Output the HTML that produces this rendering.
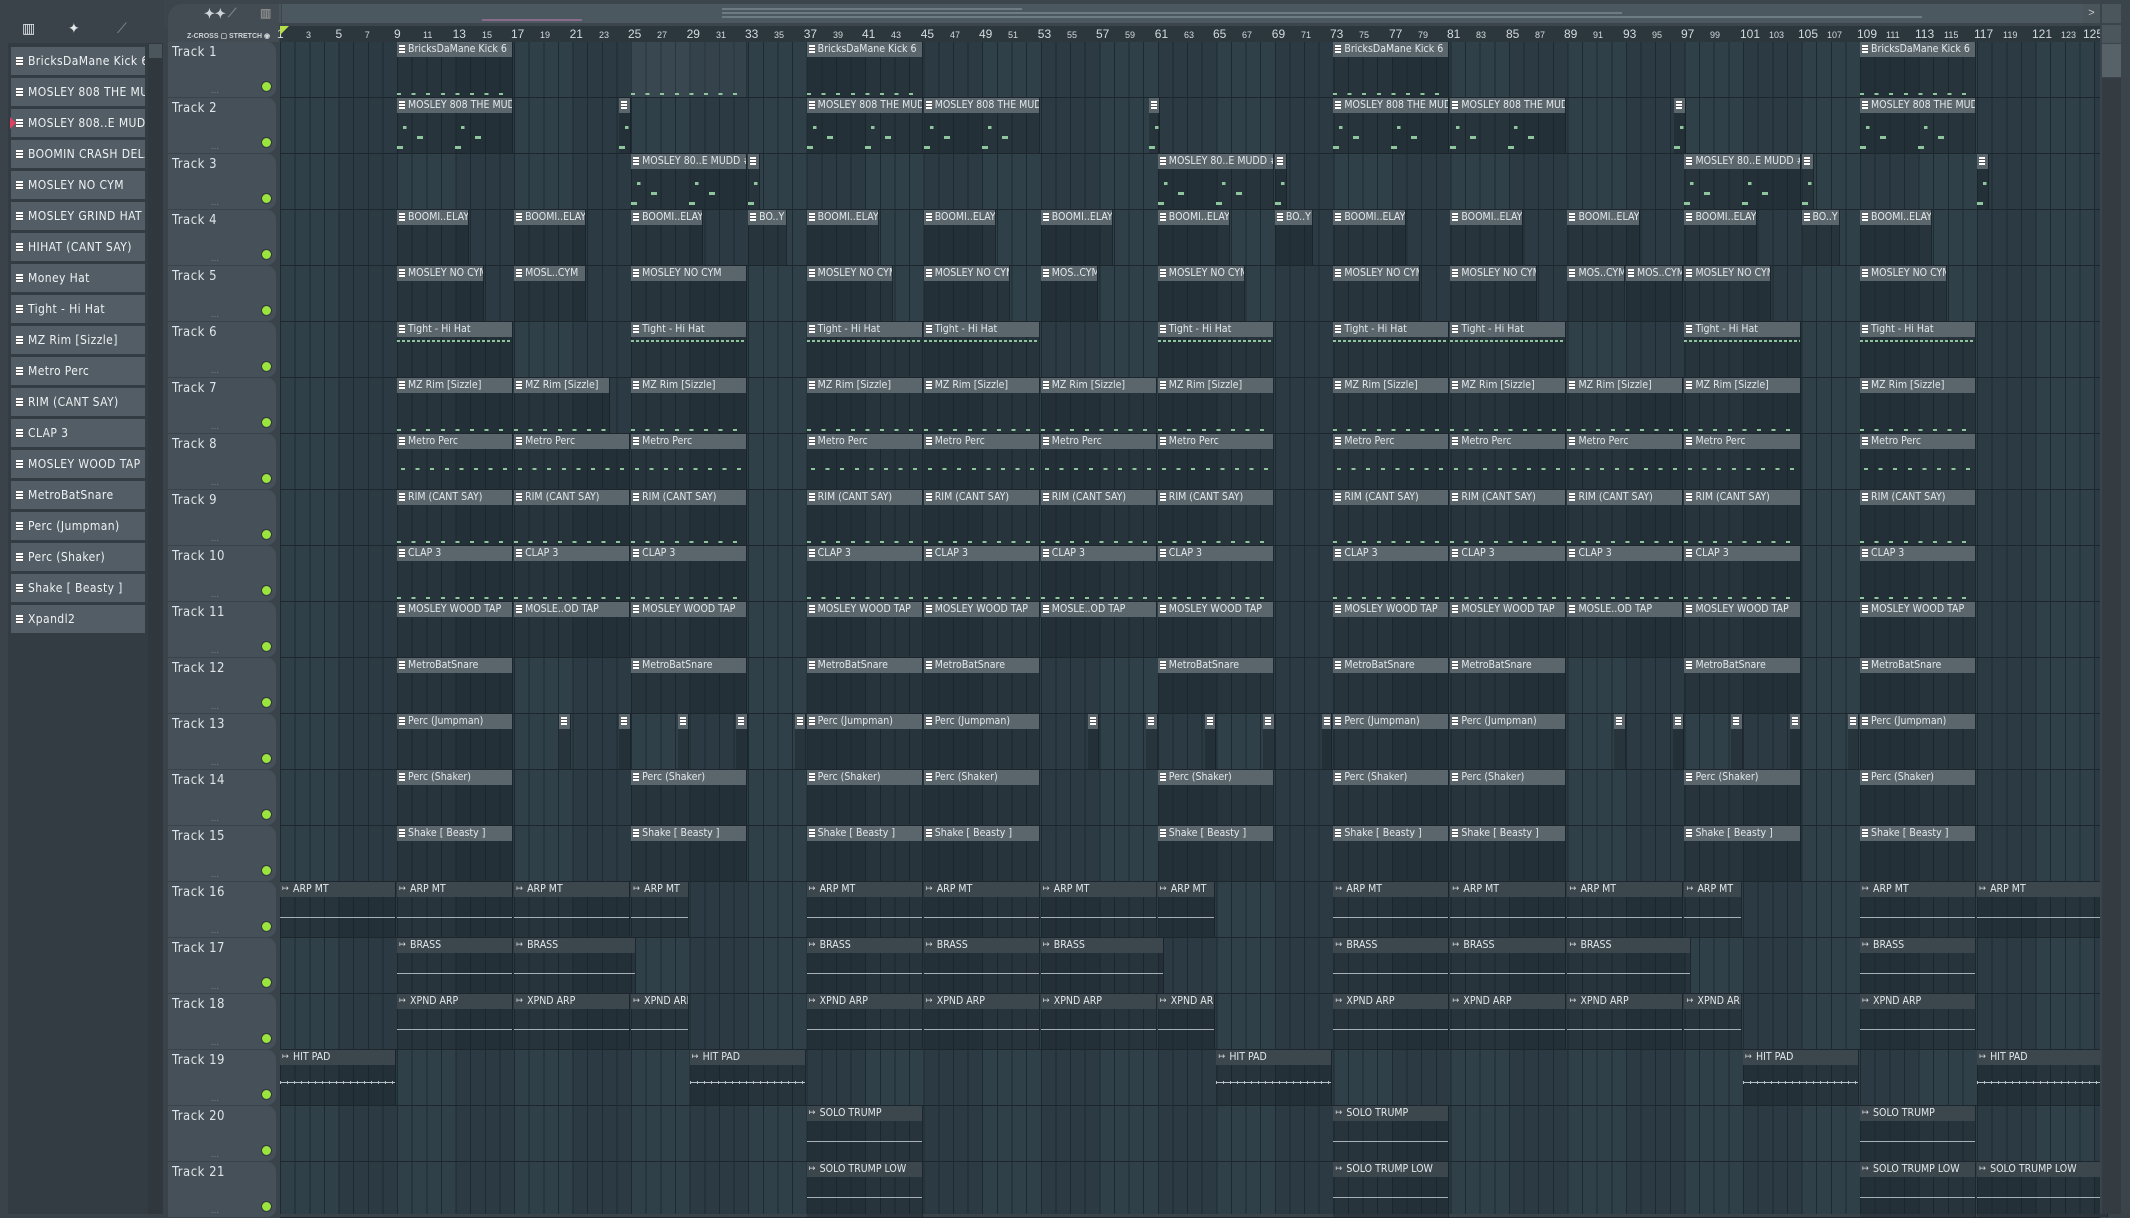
<!DOCTYPE html>
<html><head><meta charset="utf-8"><style>
*{margin:0;padding:0;box-sizing:border-box}
body{width:2130px;height:1214px;overflow:hidden;background:#3a434a;font-family:"Liberation Sans",sans-serif;position:relative}
#top{position:absolute;left:0;top:0;width:2130px;height:26px;background:#3c454c}
#ov{position:absolute;left:282px;top:4px;width:1803px;height:19px;background:#4c585f}
#ov b{position:absolute;top:3px;height:2px;background:#6f7b82}
#lb{position:absolute;left:267px;top:4px;width:14px;height:19px;background:#4a545b;color:#ccc;font-size:11px;text-align:center;line-height:19px}
#rb{position:absolute;left:2083px;top:4px;width:17px;height:19px;background:#4a545b;color:#ccc;font-size:11px;text-align:center;line-height:19px}
#tab{position:absolute;left:168px;top:4px;width:111px;height:38px;background:#434c53;border-radius:14px 0 0 0;color:#cfd5d8;font-size:7px;font-weight:bold}
#left{position:absolute;left:0;top:0;width:164px;height:1214px;background:#3a434a}
#left .ic{position:absolute;top:20px;color:#e4e9eb;font-size:14px}
#list{position:absolute;left:8px;top:43px;width:140px;height:1171px;background:#343c43}
#sb{position:absolute;left:148px;top:43px;width:15px;height:1171px;background:#30383e}
#sb i{position:absolute;left:1px;top:1px;width:13px;height:14px;background:#4b555c}
.it{position:absolute;left:3px;width:134px;height:28px;background:#535d65;color:#eef2f3;font-family:"DejaVu Sans Condensed","Liberation Sans",sans-serif;font-size:12px;line-height:28px;padding-left:17px;white-space:nowrap;overflow:hidden;letter-spacing:.4px}
.it::before{content:"";position:absolute;left:5px;top:10px;width:7px;height:9px;background:repeating-linear-gradient(#fff 0 2px,#555 2px 3px)}
#ruler{position:absolute;left:280px;top:26px;width:1820px;height:16px;background:#2c363d;color:#d4dadd}
#ruler span{position:absolute;top:1px;font-size:12px;transform:translateX(-3px)}
#ruler span.s{font-size:9px;top:4px}
#grid{position:absolute;left:280px;top:42px;width:1820px;height:1172px;
background:repeating-linear-gradient(90deg,#1e2a31 0 1px,transparent 1px 14.63px),repeating-linear-gradient(90deg,#304049 0 58.52px,#2b3a43 58.52px 117.04px)}
.hd{position:absolute;left:168px;width:108px;height:55px;background:#465058;border-radius:0 9px 9px 0;color:#dfe4e7;font-family:"DejaVu Sans Condensed","Liberation Sans",sans-serif;font-size:13px;letter-spacing:.5px;padding:3px 0 0 4px}
.hd::after{content:"";position:absolute;right:4px;bottom:5px;width:9px;height:9px;border-radius:50%;background:#9be43c;border:1px solid #334}
.hd i{position:absolute;left:43px;bottom:2px;font-style:normal;color:#8a949a;font-size:8px}
.r{position:absolute;left:280px;width:1820px;height:56px;border-bottom:1px solid #1d262c}
.r i{position:absolute;top:0;height:55px;left:calc((var(--s) - 1)*14.63px);width:calc(var(--l)*14.63px - 1px);background:rgba(24,32,38,.35);font-style:normal;color:#e3e8ea;font-family:"DejaVu Sans Condensed","Liberation Sans",sans-serif;font-size:10.5px;white-space:nowrap;overflow:hidden;border-right:1px solid rgba(0,0,0,.25)}
.r i b{position:absolute;left:0;top:0;right:0;height:15px;background:#5a656c;font-weight:normal;padding-left:11px;line-height:15px}
.r i b::before{content:"";position:absolute;left:2px;top:3px;width:6px;height:8px;background:repeating-linear-gradient(#fff 0 2px,#555 2px 3px)}
.a i b{background:#3b464d;padding-left:13px}
.a i b::before{content:"\21A6";background:none;top:0;left:2px;width:auto;height:auto;font-size:9px;color:#ddd}
.t i::after{content:"";position:absolute;left:0;right:0;bottom:2px;height:2px;background:repeating-linear-gradient(90deg,#8fc59c 0 4px,transparent 4px 14.6px)}
.d i::after{content:"";position:absolute;left:4px;right:0;top:34px;height:2px;background:repeating-linear-gradient(90deg,#8fc59c 0 4px,transparent 4px 14.6px)}
.h i::after{content:"";position:absolute;left:0;right:0;top:18px;height:2px;background:repeating-linear-gradient(90deg,#8fc59c 0 3px,transparent 3px 5px)}
.m i::after{content:"";position:absolute;left:0;right:0;top:20px;height:34px;background:linear-gradient(90deg,#8fc59c 0 6%,transparent 6%) 6px 8px/58px 3px repeat-x,linear-gradient(90deg,#8fc59c 0 10%,transparent 10%) 20px 18px/58px 3px repeat-x,linear-gradient(90deg,#8fc59c 0 10%,transparent 10%) 0 28px/58px 3px repeat-x}
.w i::after{content:"";position:absolute;left:0;right:0;top:35px;height:1px;background:#a6b0b5}
.x i::after{content:"";position:absolute;left:0;right:0;top:31px;height:3px;background:repeating-linear-gradient(90deg,#b7c0c4 0 1px,transparent 1px 7px),linear-gradient(#b7c0c4,#b7c0c4) 0 1px/100% 1px no-repeat}
#rs{position:absolute;left:2100px;top:0;width:30px;height:1214px;background:#3b444b}
#rs div{position:absolute;left:2px;width:19px;background:#4b555c}
</style></head><body>
<div id="top"><div id="lb">&lt;</div><div id="ov"><b style="left:440px;width:300px;top:4px"></b><b style="left:440px;width:900px;top:8px"></b><b style="left:440px;width:1200px;top:12px"></b><b style="left:200px;width:100px;top:15px;background:#8a6c8a"></b></div><div id="rb">&gt;</div></div>
<div id="tab"><span style="position:absolute;left:36px;top:2px;font-size:13px">✦✦</span><span style="position:absolute;left:60px;top:2px;font-size:12px;color:#7a848a">⟋</span><span style="position:absolute;left:92px;top:2px;font-size:12px;color:#888">▥</span><span style="position:absolute;left:19px;top:28px">Z-CROSS ▢ STRETCH ◉</span></div>
<div id="left"><span class="ic" style="left:22px">▥</span><span class="ic" style="left:68px">✦</span><span class="ic" style="left:117px;color:#8a949a">⟋</span>
<div id="list">
<div class="it" style="top:4px">BricksDaMane Kick 6</div>
<div class="it" style="top:35px">MOSLEY 808 THE MUDD</div>
<div class="it" style="top:66px">MOSLEY 808..E MUDD #2</div>
<div class="it" style="top:97px">BOOMIN CRASH DELAY</div>
<div class="it" style="top:128px">MOSLEY NO CYM</div>
<div class="it" style="top:159px">MOSLEY GRIND HAT</div>
<div class="it" style="top:190px">HIHAT (CANT SAY)</div>
<div class="it" style="top:221px">Money Hat</div>
<div class="it" style="top:252px">Tight - Hi Hat</div>
<div class="it" style="top:283px">MZ Rim [Sizzle]</div>
<div class="it" style="top:314px">Metro Perc</div>
<div class="it" style="top:345px">RIM (CANT SAY)</div>
<div class="it" style="top:376px">CLAP 3</div>
<div class="it" style="top:407px">MOSLEY WOOD TAP</div>
<div class="it" style="top:438px">MetroBatSnare</div>
<div class="it" style="top:469px">Perc (Jumpman)</div>
<div class="it" style="top:500px">Perc (Shaker)</div>
<div class="it" style="top:531px">Shake [ Beasty ]</div>
<div class="it" style="top:562px">Xpandl2</div>
<div style="position:absolute;left:2px;top:74px;width:0;height:0;border-left:6px solid #e04060;border-top:6px solid transparent;border-bottom:6px solid transparent"></div>
</div><div id="sb"><i></i></div></div>
<div id="ruler">
<span style="left:0">1</span><span class="s" style="left:29px">3</span><span style="left:58.5px">5</span><span class="s" style="left:87.8px">7</span><span style="left:117px">9</span><span class="s" style="left:146px">11</span><span style="left:175.6px">13</span><span class="s" style="left:205px">15</span><span style="left:234px">17</span><span class="s" style="left:263px">19</span><span style="left:292.6px">21</span><span class="s" style="left:322px">23</span><span style="left:351px">25</span><span class="s" style="left:380px">27</span><span style="left:409.6px">29</span><span class="s" style="left:439px">31</span><span style="left:468px">33</span><span class="s" style="left:497px">35</span><span style="left:526.7px">37</span><span class="s" style="left:556px">39</span><span style="left:585px">41</span><span class="s" style="left:614px">43</span><span style="left:643.7px">45</span><span class="s" style="left:673px">47</span><span style="left:702px">49</span><span class="s" style="left:731px">51</span><span style="left:760.8px">53</span><span class="s" style="left:790px">55</span><span style="left:819px">57</span><span class="s" style="left:848px">59</span><span style="left:877.8px">61</span><span class="s" style="left:907px">63</span><span style="left:936px">65</span><span class="s" style="left:965px">67</span><span style="left:994.8px">69</span><span class="s" style="left:1024px">71</span><span style="left:1053px">73</span><span class="s" style="left:1082px">75</span><span style="left:1112px">77</span><span class="s" style="left:1141px">79</span><span style="left:1170px">81</span><span class="s" style="left:1199px">83</span><span style="left:1229px">85</span><span class="s" style="left:1258px">87</span><span style="left:1287px">89</span><span class="s" style="left:1316px">91</span><span style="left:1346px">93</span><span class="s" style="left:1375px">95</span><span style="left:1404px">97</span><span class="s" style="left:1433px">99</span><span style="left:1463px">101</span><span class="s" style="left:1492px">103</span><span style="left:1521px">105</span><span class="s" style="left:1550px">107</span><span style="left:1580px">109</span><span class="s" style="left:1609px">111</span><span style="left:1638px">113</span><span class="s" style="left:1667px">115</span><span style="left:1697px">117</span><span class="s" style="left:1726px">119</span><span style="left:1755px">121</span><span class="s" style="left:1784px">123</span><span style="left:1806px">125</span>
<div style="position:absolute;left:0;top:0;width:0;height:0;border-left:9px solid #b5e04a;border-bottom:9px solid transparent"></div>
</div>
<div id="grid"></div>

<div class="hd" style="top:42px">Track 1<i>...</i></div>
<div class="hd" style="top:98px">Track 2<i>...</i></div>
<div class="hd" style="top:154px">Track 3<i>...</i></div>
<div class="hd" style="top:210px">Track 4<i>...</i></div>
<div class="hd" style="top:266px">Track 5<i>...</i></div>
<div class="hd" style="top:322px">Track 6<i>...</i></div>
<div class="hd" style="top:378px">Track 7<i>...</i></div>
<div class="hd" style="top:434px">Track 8<i>...</i></div>
<div class="hd" style="top:490px">Track 9<i>...</i></div>
<div class="hd" style="top:546px">Track 10<i>...</i></div>
<div class="hd" style="top:602px">Track 11<i>...</i></div>
<div class="hd" style="top:658px">Track 12<i>...</i></div>
<div class="hd" style="top:714px">Track 13<i>...</i></div>
<div class="hd" style="top:770px">Track 14<i>...</i></div>
<div class="hd" style="top:826px">Track 15<i>...</i></div>
<div class="hd" style="top:882px">Track 16<i>...</i></div>
<div class="hd" style="top:938px">Track 17<i>...</i></div>
<div class="hd" style="top:994px">Track 18<i>...</i></div>
<div class="hd" style="top:1050px">Track 19<i>...</i></div>
<div class="hd" style="top:1106px">Track 20<i>...</i></div>
<div class="hd" style="top:1162px">Track 21<i>...</i></div>

<div class="r t" style="top:42px">
<i style="--s:9;--l:8"><b>BricksDaMane Kick 6</b></i><i style="--s:25;--l:8;background:rgba(90,100,108,.2)"></i><i style="--s:37;--l:8"><b>BricksDaMane Kick 6</b></i><i style="--s:73;--l:8"><b>BricksDaMane Kick 6</b></i><i style="--s:109;--l:8"><b>BricksDaMane Kick 6</b></i>
</div>
<div class="r m" style="top:98px">
<i style="--s:9;--l:8"><b>MOSLEY 808 THE MUDD</b></i><i style="--s:24.2;--l:.85"><b></b></i><i style="--s:37;--l:8"><b>MOSLEY 808 THE MUDD</b></i><i style="--s:45;--l:8"><b>MOSLEY 808 THE MUDD</b></i><i style="--s:60.4;--l:.85"><b></b></i><i style="--s:73;--l:8"><b>MOSLEY 808 THE MUDD</b></i><i style="--s:81;--l:8"><b>MOSLEY 808 THE MUDD</b></i><i style="--s:96.3;--l:.85"><b></b></i><i style="--s:109;--l:8"><b>MOSLEY 808 THE MUDD</b></i>
</div>
<div class="r m" style="top:154px">
<i style="--s:25;--l:8"><b>MOSLEY 80..E MUDD #2</b></i><i style="--s:33;--l:.9"><b></b></i><i style="--s:61;--l:8"><b>MOSLEY 80..E MUDD #2</b></i><i style="--s:69;--l:.9"><b></b></i><i style="--s:97;--l:8"><b>MOSLEY 80..E MUDD #2</b></i><i style="--s:105;--l:.9"><b></b></i><i style="--s:117;--l:.9"><b></b></i>
</div>
<div class="r" style="top:210px">
<i style="--s:9;--l:5"><b>BOOMI..ELAY</b></i><i style="--s:17;--l:5"><b>BOOMI..ELAY</b></i><i style="--s:25;--l:5"><b>BOOMI..ELAY</b></i><i style="--s:33;--l:2.7"><b>BO..Y</b></i><i style="--s:37;--l:5"><b>BOOMI..ELAY</b></i><i style="--s:45;--l:5"><b>BOOMI..ELAY</b></i><i style="--s:53;--l:5"><b>BOOMI..ELAY</b></i><i style="--s:61;--l:5"><b>BOOMI..ELAY</b></i><i style="--s:69;--l:2.7"><b>BO..Y</b></i><i style="--s:73;--l:5"><b>BOOMI..ELAY</b></i><i style="--s:81;--l:5"><b>BOOMI..ELAY</b></i><i style="--s:89;--l:5"><b>BOOMI..ELAY</b></i><i style="--s:97;--l:5"><b>BOOMI..ELAY</b></i><i style="--s:105;--l:2.7"><b>BO..Y</b></i><i style="--s:109;--l:5"><b>BOOMI..ELAY</b></i>
</div>
<div class="r" style="top:266px">
<i style="--s:9;--l:6"><b>MOSLEY NO CYM</b></i><i style="--s:17;--l:5"><b>MOSL..CYM</b></i><i style="--s:25;--l:8"><b>MOSLEY NO CYM</b></i><i style="--s:37;--l:6"><b>MOSLEY NO CYM</b></i><i style="--s:45;--l:6"><b>MOSLEY NO CYM</b></i><i style="--s:53;--l:4"><b>MOS..CYM</b></i><i style="--s:61;--l:6"><b>MOSLEY NO CYM</b></i><i style="--s:73;--l:6"><b>MOSLEY NO CYM</b></i><i style="--s:81;--l:6"><b>MOSLEY NO CYM</b></i><i style="--s:89;--l:4"><b>MOS..CYM</b></i><i style="--s:93;--l:4"><b>MOS..CYM</b></i><i style="--s:97;--l:6"><b>MOSLEY NO CYM</b></i><i style="--s:109;--l:6"><b>MOSLEY NO CYM</b></i>
</div>
<div class="r h" style="top:322px">
<i style="--s:9;--l:8"><b>Tight - Hi Hat</b></i><i style="--s:25;--l:8"><b>Tight - Hi Hat</b></i><i style="--s:37;--l:8"><b>Tight - Hi Hat</b></i><i style="--s:45;--l:8"><b>Tight - Hi Hat</b></i><i style="--s:61;--l:8"><b>Tight - Hi Hat</b></i><i style="--s:73;--l:8"><b>Tight - Hi Hat</b></i><i style="--s:81;--l:8"><b>Tight - Hi Hat</b></i><i style="--s:97;--l:8"><b>Tight - Hi Hat</b></i><i style="--s:109;--l:8"><b>Tight - Hi Hat</b></i>
</div>
<div class="r t" style="top:378px">
<i style="--s:9;--l:8"><b>MZ Rim [Sizzle]</b></i><i style="--s:17;--l:6.6"><b>MZ Rim [Sizzle]</b></i><i style="--s:25;--l:8"><b>MZ Rim [Sizzle]</b></i><i style="--s:37;--l:8"><b>MZ Rim [Sizzle]</b></i><i style="--s:45;--l:8"><b>MZ Rim [Sizzle]</b></i><i style="--s:53;--l:8"><b>MZ Rim [Sizzle]</b></i><i style="--s:61;--l:8"><b>MZ Rim [Sizzle]</b></i><i style="--s:73;--l:8"><b>MZ Rim [Sizzle]</b></i><i style="--s:81;--l:8"><b>MZ Rim [Sizzle]</b></i><i style="--s:89;--l:8"><b>MZ Rim [Sizzle]</b></i><i style="--s:97;--l:8"><b>MZ Rim [Sizzle]</b></i><i style="--s:109;--l:8"><b>MZ Rim [Sizzle]</b></i>
</div>
<div class="r d" style="top:434px">
<i style="--s:9;--l:8"><b>Metro Perc</b></i><i style="--s:17;--l:8"><b>Metro Perc</b></i><i style="--s:25;--l:8"><b>Metro Perc</b></i><i style="--s:37;--l:8"><b>Metro Perc</b></i><i style="--s:45;--l:8"><b>Metro Perc</b></i><i style="--s:53;--l:8"><b>Metro Perc</b></i><i style="--s:61;--l:8"><b>Metro Perc</b></i><i style="--s:73;--l:8"><b>Metro Perc</b></i><i style="--s:81;--l:8"><b>Metro Perc</b></i><i style="--s:89;--l:8"><b>Metro Perc</b></i><i style="--s:97;--l:8"><b>Metro Perc</b></i><i style="--s:109;--l:8"><b>Metro Perc</b></i>
</div>
<div class="r t" style="top:490px">
<i style="--s:9;--l:8"><b>RIM (CANT SAY)</b></i><i style="--s:17;--l:8"><b>RIM (CANT SAY)</b></i><i style="--s:25;--l:8"><b>RIM (CANT SAY)</b></i><i style="--s:37;--l:8"><b>RIM (CANT SAY)</b></i><i style="--s:45;--l:8"><b>RIM (CANT SAY)</b></i><i style="--s:53;--l:8"><b>RIM (CANT SAY)</b></i><i style="--s:61;--l:8"><b>RIM (CANT SAY)</b></i><i style="--s:73;--l:8"><b>RIM (CANT SAY)</b></i><i style="--s:81;--l:8"><b>RIM (CANT SAY)</b></i><i style="--s:89;--l:8"><b>RIM (CANT SAY)</b></i><i style="--s:97;--l:8"><b>RIM (CANT SAY)</b></i><i style="--s:109;--l:8"><b>RIM (CANT SAY)</b></i>
</div>
<div class="r t" style="top:546px">
<i style="--s:9;--l:8"><b>CLAP 3</b></i><i style="--s:17;--l:8"><b>CLAP 3</b></i><i style="--s:25;--l:8"><b>CLAP 3</b></i><i style="--s:37;--l:8"><b>CLAP 3</b></i><i style="--s:45;--l:8"><b>CLAP 3</b></i><i style="--s:53;--l:8"><b>CLAP 3</b></i><i style="--s:61;--l:8"><b>CLAP 3</b></i><i style="--s:73;--l:8"><b>CLAP 3</b></i><i style="--s:81;--l:8"><b>CLAP 3</b></i><i style="--s:89;--l:8"><b>CLAP 3</b></i><i style="--s:97;--l:8"><b>CLAP 3</b></i><i style="--s:109;--l:8"><b>CLAP 3</b></i>
</div>
<div class="r" style="top:602px">
<i style="--s:9;--l:8"><b>MOSLEY WOOD TAP</b></i><i style="--s:17;--l:8"><b>MOSLE..OD TAP</b></i><i style="--s:25;--l:8"><b>MOSLEY WOOD TAP</b></i><i style="--s:37;--l:8"><b>MOSLEY WOOD TAP</b></i><i style="--s:45;--l:8"><b>MOSLEY WOOD TAP</b></i><i style="--s:53;--l:8"><b>MOSLE..OD TAP</b></i><i style="--s:61;--l:8"><b>MOSLEY WOOD TAP</b></i><i style="--s:73;--l:8"><b>MOSLEY WOOD TAP</b></i><i style="--s:81;--l:8"><b>MOSLEY WOOD TAP</b></i><i style="--s:89;--l:8"><b>MOSLE..OD TAP</b></i><i style="--s:97;--l:8"><b>MOSLEY WOOD TAP</b></i><i style="--s:109;--l:8"><b>MOSLEY WOOD TAP</b></i>
</div>
<div class="r" style="top:658px">
<i style="--s:9;--l:8"><b>MetroBatSnare</b></i><i style="--s:25;--l:8"><b>MetroBatSnare</b></i><i style="--s:37;--l:8"><b>MetroBatSnare</b></i><i style="--s:45;--l:8"><b>MetroBatSnare</b></i><i style="--s:61;--l:8"><b>MetroBatSnare</b></i><i style="--s:73;--l:8"><b>MetroBatSnare</b></i><i style="--s:81;--l:8"><b>MetroBatSnare</b></i><i style="--s:97;--l:8"><b>MetroBatSnare</b></i><i style="--s:109;--l:8"><b>MetroBatSnare</b></i>
</div>
<div class="r" style="top:714px">
<i style="--s:9;--l:8"><b>Perc (Jumpman)</b></i><i style="--s:20.1;--l:.85"><b></b></i><i style="--s:24.2;--l:.85"><b></b></i><i style="--s:28.2;--l:.85"><b></b></i><i style="--s:32.2;--l:.85"><b></b></i><i style="--s:36.2;--l:.8"><b></b></i><i style="--s:37;--l:8"><b>Perc (Jumpman)</b></i><i style="--s:45;--l:8"><b>Perc (Jumpman)</b></i><i style="--s:56.2;--l:.85"><b></b></i><i style="--s:60.2;--l:.85"><b></b></i><i style="--s:64.2;--l:.85"><b></b></i><i style="--s:68.2;--l:.85"><b></b></i><i style="--s:72.2;--l:.8"><b></b></i><i style="--s:73;--l:8"><b>Perc (Jumpman)</b></i><i style="--s:81;--l:8"><b>Perc (Jumpman)</b></i><i style="--s:92.2;--l:.85"><b></b></i><i style="--s:96.2;--l:.85"><b></b></i><i style="--s:100.2;--l:.85"><b></b></i><i style="--s:104.2;--l:.85"><b></b></i><i style="--s:108.2;--l:.8"><b></b></i><i style="--s:109;--l:8"><b>Perc (Jumpman)</b></i>
</div>
<div class="r" style="top:770px">
<i style="--s:9;--l:8"><b>Perc (Shaker)</b></i><i style="--s:25;--l:8"><b>Perc (Shaker)</b></i><i style="--s:37;--l:8"><b>Perc (Shaker)</b></i><i style="--s:45;--l:8"><b>Perc (Shaker)</b></i><i style="--s:61;--l:8"><b>Perc (Shaker)</b></i><i style="--s:73;--l:8"><b>Perc (Shaker)</b></i><i style="--s:81;--l:8"><b>Perc (Shaker)</b></i><i style="--s:97;--l:8"><b>Perc (Shaker)</b></i><i style="--s:109;--l:8"><b>Perc (Shaker)</b></i>
</div>
<div class="r" style="top:826px">
<i style="--s:9;--l:8"><b>Shake [ Beasty ]</b></i><i style="--s:25;--l:8"><b>Shake [ Beasty ]</b></i><i style="--s:37;--l:8"><b>Shake [ Beasty ]</b></i><i style="--s:45;--l:8"><b>Shake [ Beasty ]</b></i><i style="--s:61;--l:8"><b>Shake [ Beasty ]</b></i><i style="--s:73;--l:8"><b>Shake [ Beasty ]</b></i><i style="--s:81;--l:8"><b>Shake [ Beasty ]</b></i><i style="--s:97;--l:8"><b>Shake [ Beasty ]</b></i><i style="--s:109;--l:8"><b>Shake [ Beasty ]</b></i>
</div>
<div class="r a w" style="top:882px">
<i style="--s:1;--l:8"><b>ARP MT</b></i><i style="--s:9;--l:8"><b>ARP MT</b></i><i style="--s:17;--l:8"><b>ARP MT</b></i><i style="--s:25;--l:4"><b>ARP MT</b></i><i style="--s:37;--l:8"><b>ARP MT</b></i><i style="--s:45;--l:8"><b>ARP MT</b></i><i style="--s:53;--l:8"><b>ARP MT</b></i><i style="--s:61;--l:4"><b>ARP MT</b></i><i style="--s:73;--l:8"><b>ARP MT</b></i><i style="--s:81;--l:8"><b>ARP MT</b></i><i style="--s:89;--l:8"><b>ARP MT</b></i><i style="--s:97;--l:4"><b>ARP MT</b></i><i style="--s:109;--l:8"><b>ARP MT</b></i><i style="--s:117;--l:9"><b>ARP MT</b></i>
</div>
<div class="r a w" style="top:938px">
<i style="--s:9;--l:8"><b>BRASS</b></i><i style="--s:17;--l:8.4"><b>BRASS</b></i><i style="--s:37;--l:8"><b>BRASS</b></i><i style="--s:45;--l:8"><b>BRASS</b></i><i style="--s:53;--l:8.5"><b>BRASS</b></i><i style="--s:73;--l:8"><b>BRASS</b></i><i style="--s:81;--l:8"><b>BRASS</b></i><i style="--s:89;--l:8.5"><b>BRASS</b></i><i style="--s:109;--l:8"><b>BRASS</b></i>
</div>
<div class="r a w" style="top:994px">
<i style="--s:9;--l:8"><b>XPND ARP</b></i><i style="--s:17;--l:8"><b>XPND ARP</b></i><i style="--s:25;--l:4"><b>XPND ARP</b></i><i style="--s:37;--l:8"><b>XPND ARP</b></i><i style="--s:45;--l:8"><b>XPND ARP</b></i><i style="--s:53;--l:8"><b>XPND ARP</b></i><i style="--s:61;--l:4"><b>XPND ARP</b></i><i style="--s:73;--l:8"><b>XPND ARP</b></i><i style="--s:81;--l:8"><b>XPND ARP</b></i><i style="--s:89;--l:8"><b>XPND ARP</b></i><i style="--s:97;--l:4"><b>XPND ARP</b></i><i style="--s:109;--l:8"><b>XPND ARP</b></i>
</div>
<div class="r a x" style="top:1050px">
<i style="--s:1;--l:8"><b>HIT PAD</b></i><i style="--s:29;--l:8"><b>HIT PAD</b></i><i style="--s:65;--l:8"><b>HIT PAD</b></i><i style="--s:101;--l:8"><b>HIT PAD</b></i><i style="--s:117;--l:9"><b>HIT PAD</b></i>
</div>
<div class="r a w" style="top:1106px">
<i style="--s:37;--l:8"><b>SOLO TRUMP</b></i><i style="--s:73;--l:8"><b>SOLO TRUMP</b></i><i style="--s:109;--l:8"><b>SOLO TRUMP</b></i>
</div>
<div class="r a w" style="top:1162px">
<i style="--s:37;--l:8"><b>SOLO TRUMP LOW</b></i><i style="--s:73;--l:8"><b>SOLO TRUMP LOW</b></i><i style="--s:109;--l:8"><b>SOLO TRUMP LOW</b></i><i style="--s:117;--l:9"><b>SOLO TRUMP LOW</b></i>
</div>

<div id="rs"><div style="top:4px;height:19px"></div><div style="top:25px;height:18px"></div><div style="top:44px;height:33px;background:#566168"></div><div style="top:78px;height:1136px;background:#343c42"></div></div>
</body></html>
